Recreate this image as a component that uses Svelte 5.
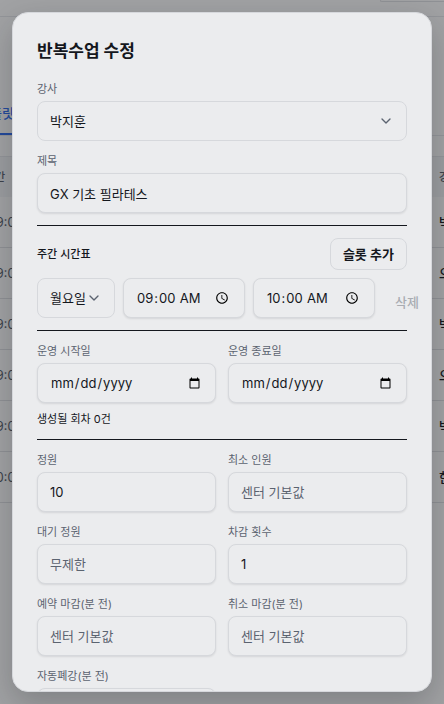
<script>
  const tableRows = [
    { time: '09:00', name: '박지훈' },
    { time: '09:00', name: '오세영' },
    { time: '09:00', name: '박지훈' },
    { time: '09:00', name: '오세영' },
    { time: '09:00', name: '박지훈' },
    { time: '10:00', name: '한유진' }
  ];

  const limits = [
    { id: 'capacity', label: '정원', value: '10', placeholder: '' },
    { id: 'minimum', label: '최소 인원', value: '', placeholder: '센터 기본값' },
    { id: 'waiting', label: '대기 정원', value: '', placeholder: '무제한' },
    { id: 'deduct', label: '차감 횟수', value: '1', placeholder: '' },
    { id: 'book-close', label: '예약 마감(분 전)', value: '', placeholder: '센터 기본값' },
    { id: 'cancel-close', label: '취소 마감(분 전)', value: '', placeholder: '센터 기본값' },
    { id: 'auto-close', label: '자동폐강(분 전)', value: '', placeholder: '센터 기본값' }
  ];
</script>

{#snippet chevron()}
  <svg class="chevron" viewBox="0 0 24 24" aria-hidden="true"><path d="m6 9 6 6 6-6" /></svg>
{/snippet}

<div class="screen">
  <div class="page" inert>
    <div class="topbar"><span class="search"></span></div>
    <div class="tabs"><a href="#templates">템플릿</a></div>
    <table>
      <thead>
        <tr><th>시간</th><th class="name">강사</th></tr>
      </thead>
      <tbody>
        {#each tableRows as row}
          <tr><td>{row.time}</td><td class="name">{row.name}</td></tr>
        {/each}
      </tbody>
    </table>
  </div>

  <div class="overlay">
    <div class="dialog" role="dialog" aria-modal="true" aria-labelledby="dialog-title">
      <h2 id="dialog-title">반복수업 수정</h2>
      <form>
        <div class="field">
          <label for="teacher">강사</label>
          <div class="select">
            <select id="teacher"><option>박지훈</option></select>
            {@render chevron()}
          </div>
        </div>
        <div class="field">
          <label for="title">제목</label>
          <input id="title" type="text" value="GX 기초 필라테스" />
        </div>

        <hr />

        <section>
          <div class="section-head">
            <h3>주간 시간표</h3>
            <button type="button">슬롯 추가</button>
          </div>
          <div class="slot">
            <div class="select compact">
              <select aria-label="요일"><option>월요일</option></select>
              {@render chevron()}
            </div>
            <input type="time" aria-label="시작 시간" value="09:00" />
            <input type="time" aria-label="종료 시간" value="10:00" />
            <button type="button" class="ghost" disabled>삭제</button>
          </div>
        </section>

        <hr />

        <section>
          <div class="grid">
            <div class="field">
              <label for="start">운영 시작일</label>
              <input id="start" type="date" />
            </div>
            <div class="field">
              <label for="end">운영 종료일</label>
              <input id="end" type="date" />
            </div>
          </div>
          <p>생성될 회차 0건</p>
        </section>

        <hr />

        <div class="grid">
          {#each limits as item}
            <div class="field">
              <label for={item.id}>{item.label}</label>
              <input id={item.id} type="text" inputmode="numeric" value={item.value} placeholder={item.placeholder} />
            </div>
          {/each}
        </div>
      </form>
    </div>
  </div>
</div>

<style>
  :global(body) {
    background: #a1a2a4;
  }

  .screen,
  .screen * {
    box-sizing: border-box;
  }

  .screen {
    position: relative;
    height: 100vh;
    overflow: hidden;
    background: #a1a2a4;
    color: #14171d;
    font-family: Inter, 'Noto Sans CJK KR', sans-serif;
    font-size: 13px;
    line-height: 20px;
  }

  .topbar {
    display: flex;
    justify-content: flex-end;
    height: 17px;
    border-bottom: 1px solid #939599;
  }

  .search {
    width: 64px;
    height: 2px;
    border: 1px solid #8f9195;
    border-top: 0;
    border-right: 0;
    border-bottom-left-radius: 8px;
  }

  .tabs {
    display: flex;
    height: 119px;
    align-items: flex-end;
    border-bottom: 1px solid #939599;
  }

  .tabs a {
    width: 64px;
    margin-left: -36px;
    padding-bottom: 10px;
    border-bottom: 2px solid #23499b;
    color: #23499b;
    font-weight: 500;
    text-align: center;
    text-decoration: none;
  }

  table {
    width: calc(100% + 64px);
    margin: 20px 0 0 -21px;
    border-collapse: separate;
    border-spacing: 0;
    border-top: 1px solid #939599;
    table-layout: fixed;
  }

  th {
    height: 40px;
    padding: 0;
    background: #9b9da0;
    color: #3d424b;
    font-size: 11px;
    font-weight: 500;
    text-align: left;
  }

  td {
    height: 51px;
    padding: 0 0 0 8px;
    border-bottom: 1px solid #8f9195;
    color: #3d424b;
    font-variant-numeric: tabular-nums;
  }

  th:first-child {
    padding-left: 6px;
  }

  .name {
    width: 48px;
    padding-left: 0;
    white-space: nowrap;
  }

  td.name {
    color: #14171d;
    font-weight: 500;
  }

  .overlay {
    position: absolute;
    inset: 0;
    padding: 12px;
  }

  .dialog {
    height: 100%;
    padding: 24px;
    overflow: hidden;
    border: 1px solid #d6d8dc;
    border-radius: 16px;
    background: #ebecee;
    box-shadow: 0 12px 32px rgb(20 23 29 / 24%);
  }

  h2 {
    margin: 0 0 16px;
    font-size: 17px;
    font-weight: 700;
    line-height: 28px;
  }

  h3,
  p {
    margin: 0;
    font-size: 11px;
    font-weight: 500;
    line-height: 16px;
  }

  p {
    font-weight: 400;
  }

  form {
    display: flex;
    flex-direction: column;
    gap: 12px;
  }

  section {
    display: flex;
    flex-direction: column;
    gap: 8px;
  }

  hr {
    width: 100%;
    margin: 0;
    border: 0;
    border-top: 1px solid #14171d;
  }

  .field {
    display: flex;
    min-width: 0;
    flex-direction: column;
    gap: 4px;
  }

  label {
    color: #5b6370;
    font-size: 11px;
    line-height: 16px;
  }

  input,
  select,
  button {
    margin: 0;
    border: 1px solid #d6d8dc;
    border-radius: 8px;
    background: transparent;
    color: inherit;
    font: inherit;
  }

  input,
  select {
    height: 40px;
    padding: 0 12px;
  }

  input {
    min-width: 0;
    box-shadow: 0 1px 2px rgb(20 23 29 / 10%);
    background: #ebecee;
  }

  input::placeholder {
    color: #5b6370;
    opacity: 1;
  }

  .select {
    display: grid;
    align-items: center;
  }

  .select > :global(*) {
    grid-area: 1 / 1;
  }

  select {
    width: 100%;
    appearance: none;
  }

  .chevron {
    width: 16px;
    height: 16px;
    margin-right: 13px;
    justify-self: end;
    fill: none;
    stroke: #5b6370;
    stroke-linecap: round;
    stroke-linejoin: round;
    stroke-width: 2;
    pointer-events: none;
  }

  .compact {
    width: 78px;
    flex: none;
  }

  .section-head {
    display: flex;
    align-items: center;
    justify-content: space-between;
  }

  button {
    height: 32px;
    padding: 0 12px;
    font-weight: 600;
    white-space: nowrap;
  }

  .slot {
    display: flex;
    align-items: flex-end;
    gap: 8px;
  }

  .slot input {
    width: 122px;
    flex: none;
  }

  .ghost {
    flex: none;
    border: 0;
    color: #a9acb2;
    font-weight: 500;
  }

  .grid {
    display: grid;
    grid-template-columns: repeat(2, minmax(0, 1fr));
    gap: 12px;
  }
</style>
